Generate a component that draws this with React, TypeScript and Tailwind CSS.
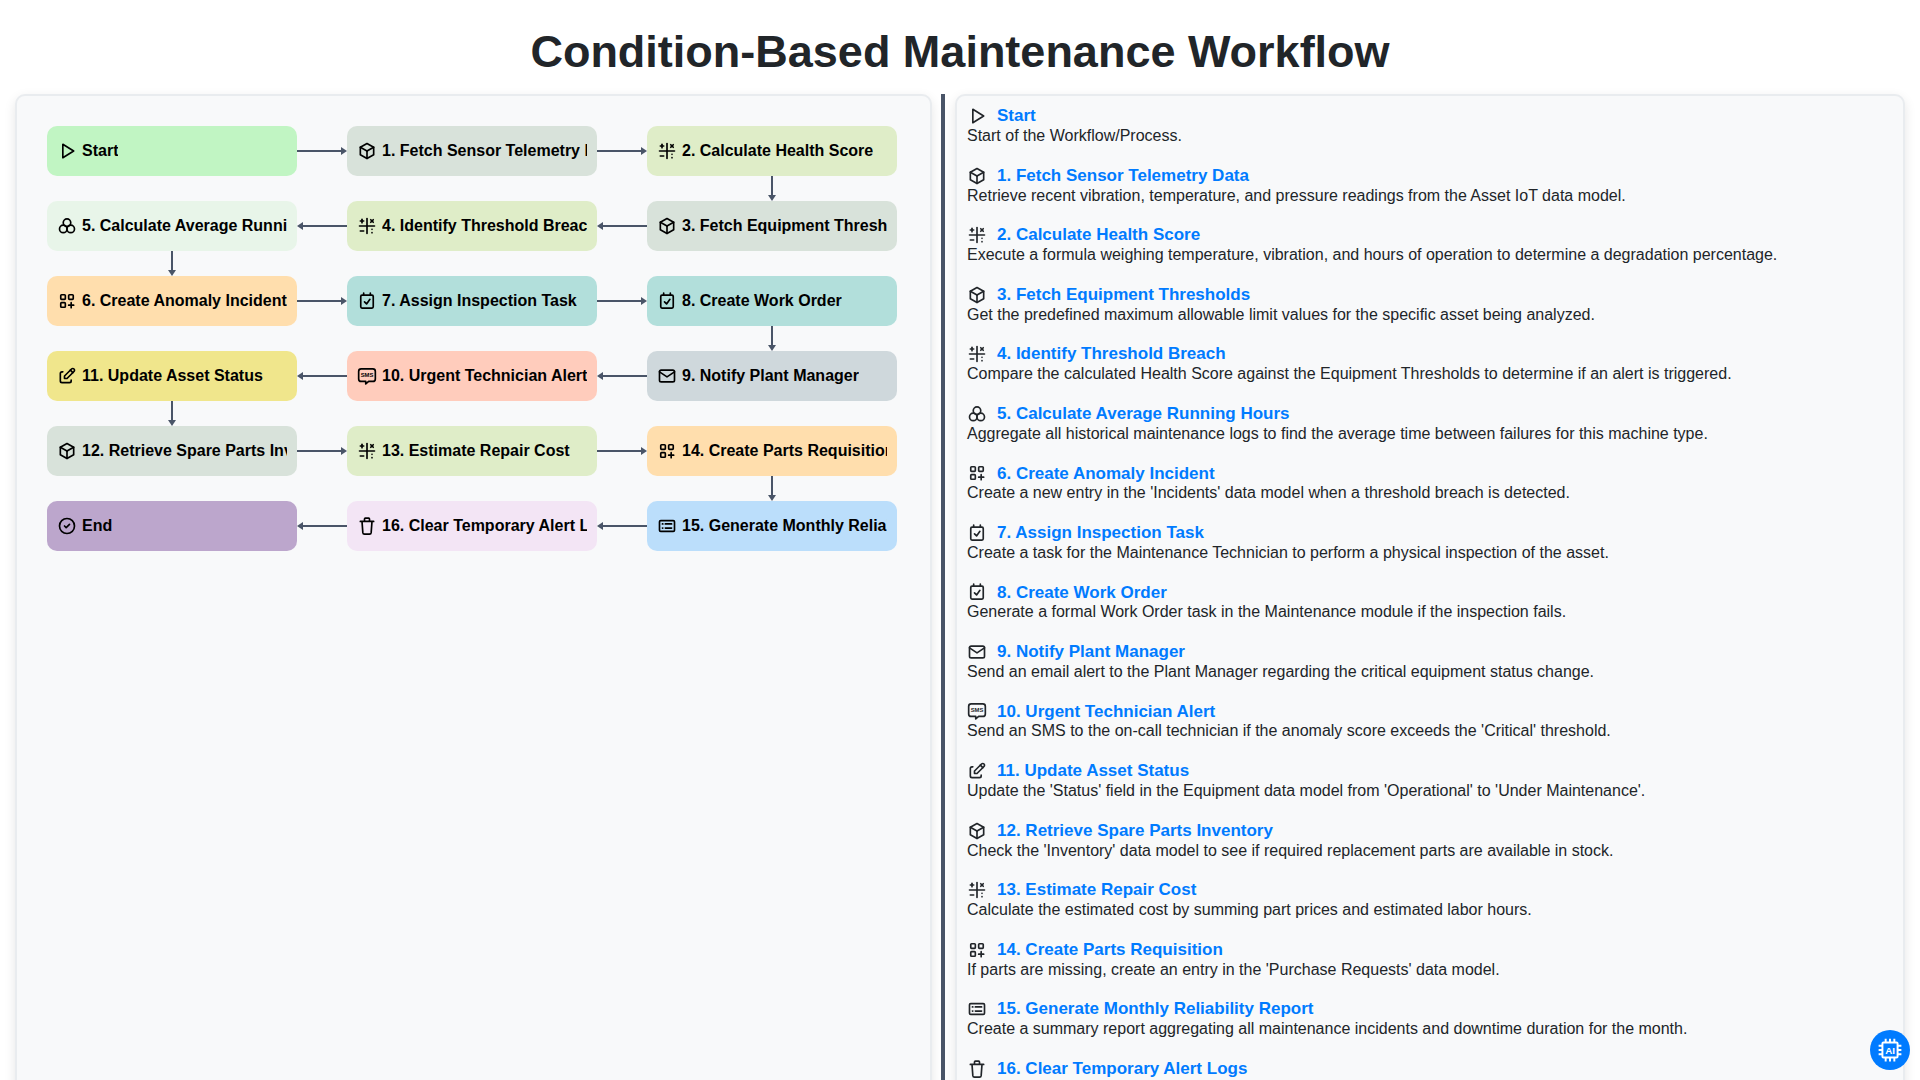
import React from "react";
import { TbPlayerPlay, TbBox, TbMathSymbols, TbMail, TbEdit, TbCircleCheck } from "react-icons/tb";

type IconProps = { className?: string };

const TripleCircles = ({ className }: IconProps) => (
  <svg className={className} viewBox="0 0 24 24" fill="none" stroke="currentColor" strokeWidth="2">
    <circle cx="12" cy="8" r="4.5" />
    <circle cx="7.5" cy="15.5" r="4.5" />
    <circle cx="16.5" cy="15.5" r="4.5" />
  </svg>
);

const AppsPlus = ({ className }: IconProps) => (
  <svg className={className} viewBox="0 0 24 24" fill="none" stroke="currentColor" strokeWidth="2" strokeLinecap="round" strokeLinejoin="round">
    <rect x="4.5" y="4.5" width="5.5" height="5.5" rx="1" />
    <rect x="14" y="4.5" width="5.5" height="5.5" rx="1" />
    <rect x="4.5" y="14" width="5.5" height="5.5" rx="1" />
    <path d="M14 17h6M17 14v6" />
  </svg>
);

const CalendarTick = ({ className }: IconProps) => (
  <svg className={className} viewBox="0 0 24 24" fill="none" stroke="currentColor" strokeWidth="2" strokeLinecap="round" strokeLinejoin="round">
    <rect x="4.5" y="5" width="15" height="15.5" rx="1.5" />
    <path d="M8 2.5V5M16 2.5V5M9 13l2.5 2.5L15.5 10" />
  </svg>
);

const SmsBubble = ({ className }: IconProps) => (
  <svg className={className} viewBox="0 0 24 24" fill="none" stroke="currentColor" strokeWidth="2" strokeLinecap="round" strokeLinejoin="round">
    <path d="M5 3.5h14a3 3 0 0 1 3 3v9a3 3 0 0 1-3 3h-5l-3.5 3v-3H5a3 3 0 0 1-3-3v-9a3 3 0 0 1 3-3z" />
    <text x="12" y="13.2" textAnchor="middle" fontSize="7" fontWeight="700" fontFamily="Liberation Sans" fill="currentColor" stroke="none">SMS</text>
  </svg>
);

const CardList = ({ className }: IconProps) => (
  <svg className={className} viewBox="0 0 24 24" fill="none" stroke="currentColor" strokeWidth="2" strokeLinecap="round" strokeLinejoin="round">
    <rect x="3" y="5.5" width="18" height="13" rx="1.5" />
    <path d="M6.5 9.5h.5M6.5 14.5h.5M10 9.5h7.5M10 14.5h7.5" />
  </svg>
);

const Bin = ({ className }: IconProps) => (
  <svg className={className} viewBox="0 0 24 24" fill="none" stroke="currentColor" strokeWidth="2" strokeLinecap="round" strokeLinejoin="round">
    <path d="M4 6.5h16M6 6.5l1 13.5a2 2 0 0 0 2 1.8h6a2 2 0 0 0 2-1.8l1-13.5M9 6.5V3.5a1 1 0 0 1 1-1h4a1 1 0 0 1 1 1v3" />
  </svg>
);

const ChipAi = ({ className }: IconProps) => (
  <svg className={className} viewBox="0 0 24 24" fill="none" stroke="currentColor" strokeWidth="1.8">
    <rect x="5" y="5" width="14" height="14" rx="1" />
    <path d="M8 1.5V5M12 1.5V5M16 1.5V5M8 19v3.5M12 19v3.5M16 19v3.5M1.5 8H5M1.5 12H5M1.5 16H5M19 8h3.5M19 12h3.5M19 16h3.5" />
    <text x="12" y="15.4" textAnchor="middle" fontSize="9" fontWeight="700" fontFamily="Liberation Sans" fill="currentColor" stroke="none">AI</text>
  </svg>
);

const steps = {
  start: { icon: TbPlayerPlay, title: "Start", desc: "Start of the Workflow/Process.", bg: "bg-[#c1f5c3]" },
  s1: { icon: TbBox, title: "1. Fetch Sensor Telemetry Data", desc: "Retrieve recent vibration, temperature, and pressure readings from the Asset IoT data model.", bg: "bg-[#d8e2da]" },
  s2: { icon: TbMathSymbols, title: "2. Calculate Health Score", desc: "Execute a formula weighing temperature, vibration, and hours of operation to determine a degradation percentage.", bg: "bg-[#dfedc8]" },
  s3: { icon: TbBox, title: "3. Fetch Equipment Thresholds", desc: "Get the predefined maximum allowable limit values for the specific asset being analyzed.", bg: "bg-[#d8e2da]" },
  s4: { icon: TbMathSymbols, title: "4. Identify Threshold Breach", desc: "Compare the calculated Health Score against the Equipment Thresholds to determine if an alert is triggered.", bg: "bg-[#dfedc8]" },
  s5: { icon: TripleCircles, title: "5. Calculate Average Running Hours", desc: "Aggregate all historical maintenance logs to find the average time between failures for this machine type.", bg: "bg-[#e8f5e9]" },
  s6: { icon: AppsPlus, title: "6. Create Anomaly Incident", desc: "Create a new entry in the 'Incidents' data model when a threshold breach is detected.", bg: "bg-[#ffdead]" },
  s7: { icon: CalendarTick, title: "7. Assign Inspection Task", desc: "Create a task for the Maintenance Technician to perform a physical inspection of the asset.", bg: "bg-[#b2dfdb]" },
  s8: { icon: CalendarTick, title: "8. Create Work Order", desc: "Generate a formal Work Order task in the Maintenance module if the inspection fails.", bg: "bg-[#b2dfdb]" },
  s9: { icon: TbMail, title: "9. Notify Plant Manager", desc: "Send an email alert to the Plant Manager regarding the critical equipment status change.", bg: "bg-[#cfd8dc]" },
  s10: { icon: SmsBubble, title: "10. Urgent Technician Alert", desc: "Send an SMS to the on-call technician if the anomaly score exceeds the 'Critical' threshold.", bg: "bg-[#ffccbc]" },
  s11: { icon: TbEdit, title: "11. Update Asset Status", desc: "Update the 'Status' field in the Equipment data model from 'Operational' to 'Under Maintenance'.", bg: "bg-[#f0e68c]" },
  s12: { icon: TbBox, title: "12. Retrieve Spare Parts Inventory", desc: "Check the 'Inventory' data model to see if required replacement parts are available in stock.", bg: "bg-[#d8e2da]" },
  s13: { icon: TbMathSymbols, title: "13. Estimate Repair Cost", desc: "Calculate the estimated cost by summing part prices and estimated labor hours.", bg: "bg-[#dfedc8]" },
  s14: { icon: AppsPlus, title: "14. Create Parts Requisition", desc: "If parts are missing, create an entry in the 'Purchase Requests' data model.", bg: "bg-[#ffdead]" },
  s15: { icon: CardList, title: "15. Generate Monthly Reliability Report", desc: "Create a summary report aggregating all maintenance incidents and downtime duration for the month.", bg: "bg-[#bbdefb]" },
  s16: { icon: Bin, title: "16. Clear Temporary Alert Logs", desc: "", bg: "bg-[#f3e5f5]" },
  end: { icon: TbCircleCheck, title: "End", desc: "", bg: "bg-[#bca6cc]" },
};

type StepKey = keyof typeof steps;

// the flow snakes left-to-right, then right-to-left, with a drop between rows
const flowRows: { ids: StepKey[]; dir: "right" | "left"; dropCol?: number }[] = [
  { ids: ["start", "s1", "s2"], dir: "right", dropCol: 2 },
  { ids: ["s5", "s4", "s3"], dir: "left", dropCol: 0 },
  { ids: ["s6", "s7", "s8"], dir: "right", dropCol: 2 },
  { ids: ["s11", "s10", "s9"], dir: "left", dropCol: 0 },
  { ids: ["s12", "s13", "s14"], dir: "right", dropCol: 2 },
  { ids: ["end", "s16", "s15"], dir: "left" },
];

const listOrder: StepKey[] = ["start", "s1", "s2", "s3", "s4", "s5", "s6", "s7", "s8", "s9", "s10", "s11", "s12", "s13", "s14", "s15", "s16"];

function FlowCard({ id }: { id: StepKey }) {
  const step = steps[id];
  const Icon = step.icon;
  return (
    <div className={`w-[250px] h-[50px] shrink-0 rounded-[10px] flex items-center px-[10px] gap-[5px] ${step.bg}`}>
      <Icon className="w-5 h-5 shrink-0 text-black" />
      <span className="overflow-hidden whitespace-nowrap text-base font-bold text-black">{step.title}</span>
    </div>
  );
}

function HArrow({ dir }: { dir: "right" | "left" }) {
  return (
    <div className={`w-[50px] shrink-0 flex items-center ${dir === "left" ? "flex-row-reverse" : ""}`}>
      <div className="flex-1 h-[2px] bg-[#4a5568]" />
      <svg className="w-[6px] h-2 shrink-0 text-[#4a5568]" viewBox="0 0 6 8" fill="currentColor">
        <path d={dir === "right" ? "M0 0l6 4-6 4z" : "M6 0L0 4l6 4z"} />
      </svg>
    </div>
  );
}

function DropRow({ col }: { col: number }) {
  return (
    <div className={`h-[25px] w-[250px] flex flex-col items-center ${col === 2 ? "ml-[600px]" : ""}`}>
      <div className="flex-1 w-[2px] bg-[#4a5568]" />
      <svg className="w-2 h-[6px] shrink-0 text-[#4a5568]" viewBox="0 0 8 6" fill="currentColor">
        <path d="M0 0l4 6 4-6z" />
      </svg>
    </div>
  );
}

function ListItem({ id }: { id: StepKey }) {
  const step = steps[id];
  const Icon = step.icon;
  return (
    <div className="mb-[19.55px]">
      <div className="h-5 flex items-center gap-[10px]">
        <Icon className="w-5 h-5 shrink-0 text-[#212529]" />
        <span className="text-[17px] font-bold text-[#007bff]">{step.title}</span>
      </div>
      <p className="h-5 leading-5 text-base text-[#212529]">{step.desc}</p>
    </div>
  );
}

export default function App() {
  return (
    <div className="h-screen overflow-hidden bg-white px-[15px] font-['Liberation_Sans',Arial,sans-serif]">
      <h1 className="h-[94px] pt-[9px] flex items-center justify-center text-[45px] font-bold text-[#212529]">
        Condition-Based Maintenance Workflow
      </h1>
      <div className="flex h-[1200px]">
        <section className="w-[917px] shrink-0 rounded-t-[10px] border-2 border-[#e9ecef] bg-[#f8f9fa] p-[30px] shadow-[0_4px_12px_rgba(0,0,0,0.1)]">
          {flowRows.map((row) => (
            <div key={row.ids[0]}>
              <div className="flex">
                <FlowCard id={row.ids[0]} />
                <HArrow dir={row.dir} />
                <FlowCard id={row.ids[1]} />
                <HArrow dir={row.dir} />
                <FlowCard id={row.ids[2]} />
              </div>
              {row.dropCol !== undefined && <DropRow col={row.dropCol} />}
            </div>
          ))}
        </section>
        <div className="w-[4px] ml-[9px] mr-[10px] shrink-0 bg-[#4a5568]" />
        <section className="flex-1 rounded-t-[10px] border-2 border-[#e9ecef] bg-[#f8f9fa] pt-[10px] pl-[10px] shadow-[0_4px_12px_rgba(0,0,0,0.1)]">
          {listOrder.map((id) => (
            <ListItem key={id} id={id} />
          ))}
        </section>
      </div>
      <button className="fixed right-[10px] bottom-[10px] w-10 h-10 rounded-full bg-[#007bff] flex items-center justify-center text-white">
        <ChipAi className="w-[26px] h-[26px]" />
      </button>
    </div>
  );
}
